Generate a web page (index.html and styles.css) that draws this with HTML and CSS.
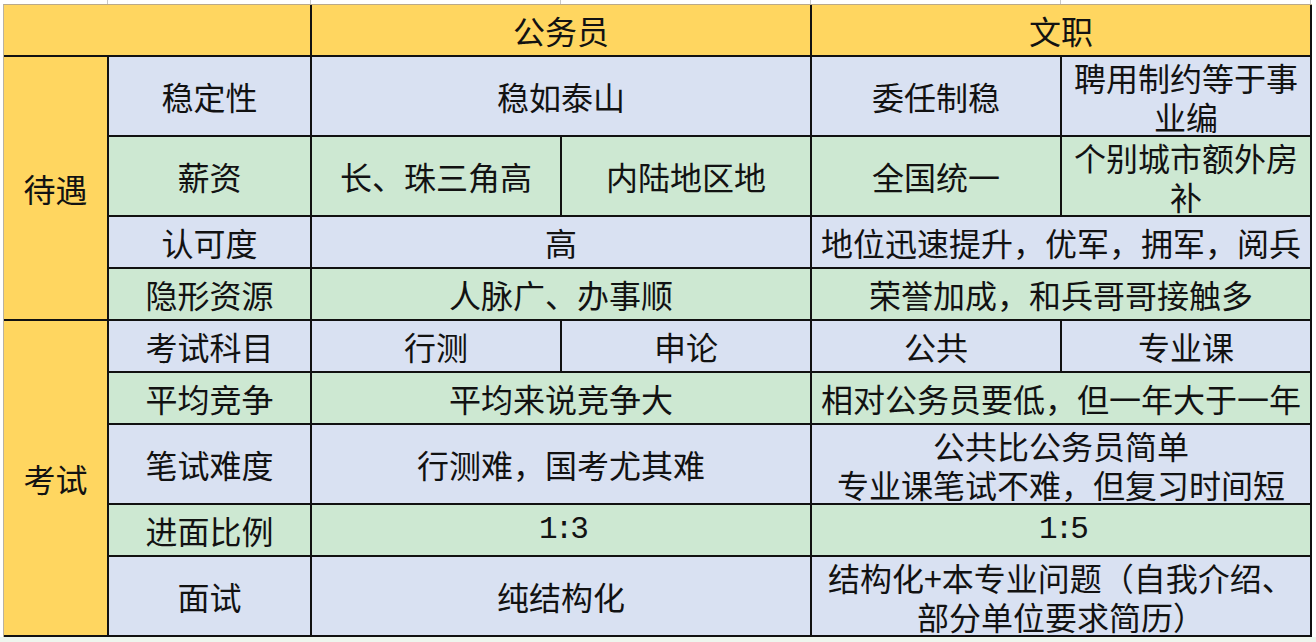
FILE: index.html
```html
<!DOCTYPE html>
<html lang="zh-CN">
<head>
<meta charset="utf-8">
<title>公务员 vs 文职</title>
<link rel="stylesheet" href="styles.css">
</head>
<body>
<div class="sheet-top">
  <div class="gl w0"></div><div class="gl w1"></div><div class="gl w2"></div><div class="gl w2"></div><div class="gl w2"></div><div class="gl w2"></div>
</div>
<div class="wrap">
  <div class="table">
    <div class="cell yellow span2"></div>
    <div class="cell yellow span2">公务员</div>
    <div class="cell yellow span2">文职</div>

    <div class="cell yellow cat-a">待遇</div>
    <div class="cell blue">稳定性</div>
    <div class="cell blue span2">稳如泰山</div>
    <div class="cell blue">委任制稳</div>
    <div class="cell blue multi"><span class="ln">聘用制约等于事</span><span class="ln">业编</span></div>

    <div class="cell green">薪资</div>
    <div class="cell green">长、珠三角高</div>
    <div class="cell green">内陆地区地</div>
    <div class="cell green">全国统一</div>
    <div class="cell green multi"><span class="ln">个别城市额外房</span><span class="ln">补</span></div>

    <div class="cell blue">认可度</div>
    <div class="cell blue span2">高</div>
    <div class="cell blue span2">地位迅速提升，优军，拥军，阅兵</div>

    <div class="cell green">隐形资源</div>
    <div class="cell green span2">人脉广、办事顺</div>
    <div class="cell green span2">荣誉加成，和兵哥哥接触多</div>

    <div class="cell yellow cat-b">考试</div>
    <div class="cell blue">考试科目</div>
    <div class="cell blue">行测</div>
    <div class="cell blue">申论</div>
    <div class="cell blue">公共</div>
    <div class="cell blue">专业课</div>

    <div class="cell green">平均竞争</div>
    <div class="cell green span2">平均来说竞争大</div>
    <div class="cell green span2">相对公务员要低，但一年大于一年</div>

    <div class="cell blue">笔试难度</div>
    <div class="cell blue span2">行测难，国考尤其难</div>
    <div class="cell blue span2 multi"><span class="ln">公共比公务员简单</span><span class="ln">专业课笔试不难，但复习时间短</span></div>

    <div class="cell green">进面比例</div>
    <div class="cell green span2 mono">1:3</div>
    <div class="cell green span2 mono">1:5</div>

    <div class="cell blue">面试</div>
    <div class="cell blue span2">纯结构化</div>
    <div class="cell blue span2 multi"><span class="ln">结构化+本专业问题（自我介绍、</span><span class="ln">部分单位要求简历）</span></div>
  </div>
</div>
<div class="sheet-bottom"></div>
</body>
</html>
```

FILE: styles.css
```css
html, body {
  margin: 0;
  padding: 0;
  background: #ffffff;
}

body {
  width: 1316px;
  height: 642px;
  overflow: hidden;
  font-family: "Noto Sans CJK SC", "Noto Sans", sans-serif;
  color: #121212;
}

.sheet-top {
  display: flex;
  height: 4px;
  padding-left: 3px;
}

.gl {
  height: 4px;
  border-right: 1px solid #c8c8c8;
  box-sizing: border-box;
}
.w0 { width: 105px; }
.w1 { width: 203px; }
.w2 { width: 250px; }

.wrap {
  padding-left: 3px;
}

.table {
  display: inline-grid;
  grid-template-columns: 103px 201px 248px 248px 248px 248px;
  grid-template-rows: 50px 78px 78px 50px 50px 50px 50px 78px 50px 78px;
  gap: 2px;
  background: #111111;
  border-left: 1px solid #b9b2a2;
  border-top: 1px solid #b9a98a;
  padding: 0 2px 2px 0;
}

.cell {
  display: flex;
  align-items: center;
  justify-content: center;
  text-align: center;
  font-size: 32px;
  line-height: 40px;
  white-space: nowrap;
}

.span2 { grid-column: span 2; }
.cat-a { grid-row: span 4; }
.cat-b { grid-row: span 5; }

.yellow { background: #ffd660; }
.blue { background: #d9e1f2; }
.green { background: #cde8d2; }

.multi {
  flex-direction: column;
  padding-top: 1px;
}

.ln {
  display: block;
  height: 39px;
  line-height: 39px;
}

.mono {
  font-family: "Liberation Mono", "DejaVu Sans Mono", monospace;
  font-size: 31px;
  letter-spacing: -3px;
  padding-left: 3px;
}

.sheet-bottom {
  height: 5px;
  background: #eef6ee;
}
```
